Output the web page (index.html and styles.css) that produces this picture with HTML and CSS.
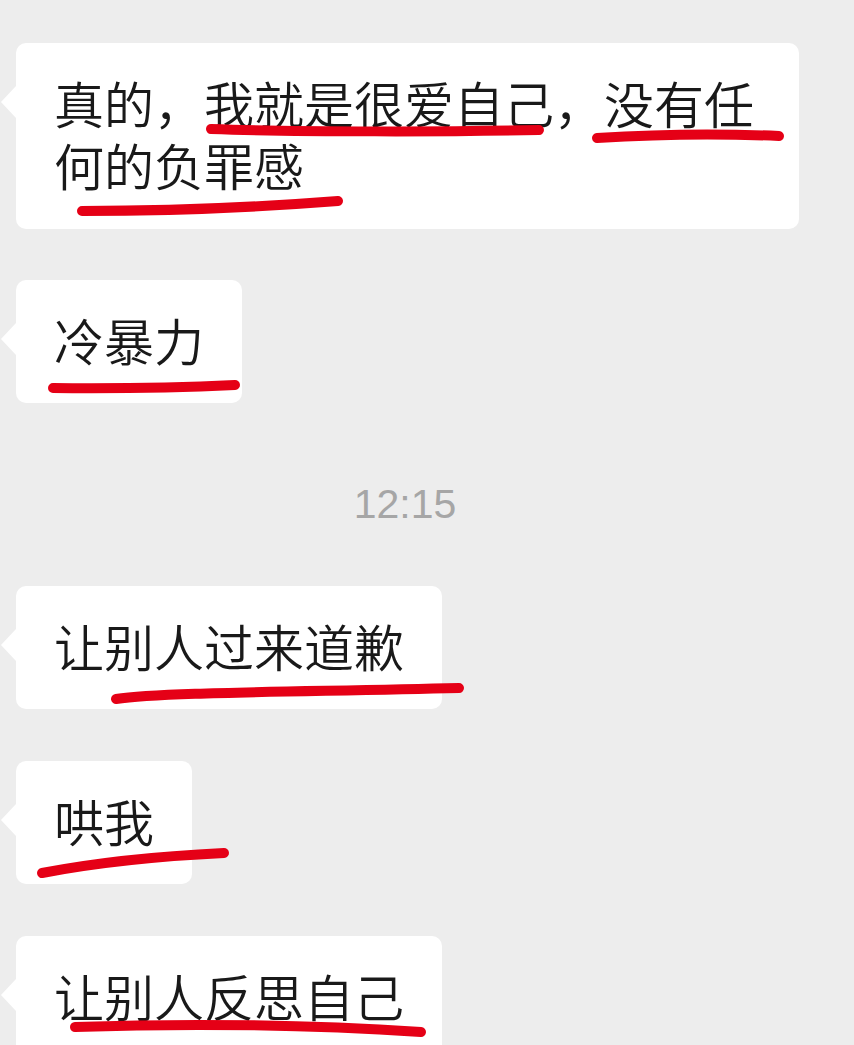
FILE: index.html
```html
<!DOCTYPE html>
<html lang="zh-CN">
<head>
    <meta charset="UTF-8">
    <meta name="viewport" content="width=device-width, initial-scale=1.0">
    <title>聊天记录</title>
    <link rel="stylesheet" href="styles.css">
</head>
<body>
    <div class="page">
        <div class="chat">
            <div class="bubble bubble-wide">真的，我就是很爱自己，没有任何的负罪感</div>
            <div class="bubble">冷暴力</div>
            <div class="time">12:15</div>
            <div class="bubble">让别人过来道歉</div>
            <div class="bubble">哄我</div>
            <div class="bubble">让别人反思自己</div>
        </div>

        <!-- Traits rouges dessinés à la main -->
        <svg class="marks" width="854" height="1045" viewBox="0 0 854 1045">
            <path d="M211 129 C 300 132, 450 132, 539 130" />
            <path d="M597 138 Q 690 132, 779 136" />
            <path d="M82 211 Q 210 211, 338 201" />
            <path d="M53 388 Q 150 389, 235 385" />
            <path d="M116 699 C 160 692, 300 692, 459 688" />
            <path d="M42 873 Q 120 858, 224 853" />
            <path d="M75 1027 Q 250 1021, 421 1032" />
        </svg>
    </div>
</body>
</html>
```

FILE: styles.css
```css
/* Base */
* {
    margin: 0;
    padding: 0;
    box-sizing: border-box;
}

body {
    background-color: #ededed;
    color: #191919;
    font-family: "Noto Sans CJK SC", "Noto Sans", sans-serif;
}

.page {
    position: relative;
    width: 854px;
    height: 1045px;
    overflow: hidden;
}

/* Fil de discussion */
.chat {
    display: flex;
    flex-direction: column;
    align-items: flex-start;
    padding: 43px 16px 0 16px;
}

/* Bulles */
.bubble {
    position: relative;
    background: #fff;
    border-radius: 10px;
    padding: 28px 38px 33px 38px;
    font-size: 50px;
    font-weight: 350;
    line-height: 62px;
    margin-bottom: 52px;
}

.bubble::before {
    content: "";
    position: absolute;
    left: -15px;
    top: 43px;
    border-top: 16px solid transparent;
    border-bottom: 16px solid transparent;
    border-right: 15px solid #fff;
}

.bubble-wide {
    max-width: 783px;
    padding-right: 36px;
    padding-bottom: 34px;
    margin-bottom: 51px;
}

/* Heure */
.time {
    align-self: stretch;
    text-align: center;
    padding-right: 44px;
    margin: 25px 0 58px;
    font-family: "Liberation Sans", Arial, sans-serif;
    font-size: 41px;
    line-height: 48px;
    color: #a6a6a6;
}

/* Annotations */
.marks {
    position: absolute;
    top: 0;
    left: 0;
    pointer-events: none;
}

.marks path {
    fill: none;
    stroke: #e50016;
    stroke-width: 10;
    stroke-linecap: round;
}
```
